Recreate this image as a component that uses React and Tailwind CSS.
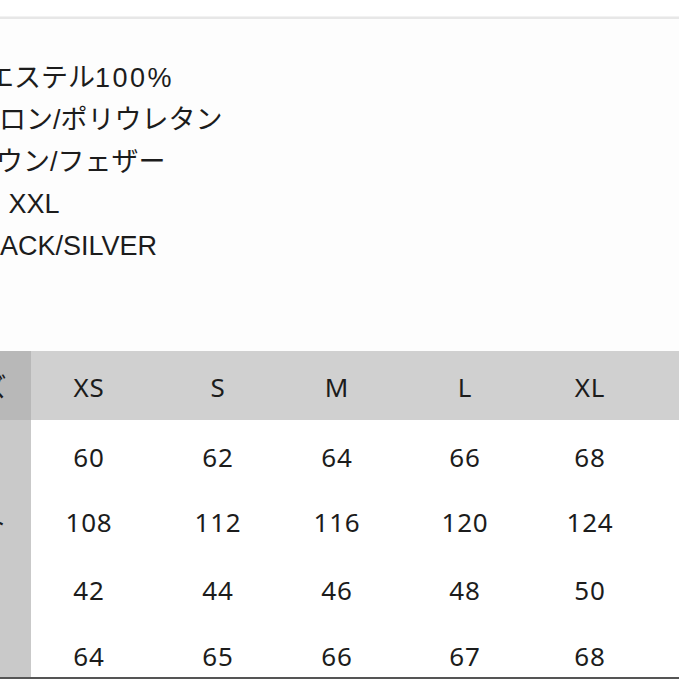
export default function App() {
  const lines = [
    { t: "ポリエステル", t2: "100%", ml: "ml-[-67px]" },
    { t: "ナイロン/ポリウレタン", ml: "ml-[-55px]" },
    { t: "ダウン/フェザー", ml: "ml-[-31px]" },
    { t: "XS 〜\u00a0\u00a0XXL", ml: "ml-[-77px]" },
    { t: "BLACK/SILVER", ml: "ml-[-33px]" },
  ];
  const sizes = ["XS", "S", "M", "L", "XL", "XXL"];
  const rows = [
    { label: "着丈", v: ["60", "62", "64", "66", "68", "70"], h: "h-[65px]", p: "items-center pt-[9px]" },
    { label: "バスト", v: ["108", "112", "116", "120", "124", "128"], h: "h-[68px]", p: "items-center pt-[6px]" },
    { label: "肩幅", v: ["42", "44", "46", "48", "50", "52"], h: "h-[68px]", p: "items-center pt-[6px]" },
    { label: "袖丈", v: ["64", "65", "66", "67", "68", "69"], h: "h-[56px]", p: "items-start pt-[16px]" },
  ];
  const cols = "grid grid-cols-[127px_116px_142px_96px_160px_90px_200px]";
  return (
    <div className="w-[679px] h-[679px] overflow-hidden bg-white flex flex-col text-[#1c1c1c]">
      <div className="h-[16px] shrink-0 bg-white" />
      <div className="h-[3px] shrink-0 border-t border-[#f2f2f2] border-b-2 border-b-[#e7e7e7]" />
      <div className="flex flex-col pt-[38px] h-[332px] shrink-0 bg-[#fdfdfd] overflow-hidden whitespace-nowrap text-[27px] leading-[42px] font-['Liberation_Sans','Noto_Sans_CJK_JP',sans-serif]">
        {lines.map((l) => (
          <div key={l.t} className={l.ml}>
            {l.t}
            {l.t2 && <span className="tracking-[2.5px]">{l.t2}</span>}
          </div>
        ))}
      </div>
      <div className="ml-[-96px] flex flex-col font-['Noto_Sans','Noto_Sans_CJK_JP',sans-serif] text-[26px] tracking-[0.8px]">
        <div className={cols + " h-[69px] bg-[#d0d0d0]"}>
          <div className="flex items-center justify-center bg-[#b8b8b8] pt-[4px]">サイズ</div>
          {sizes.map((s) => (
            <div key={s} className="flex items-center justify-center pt-[4px]">{s}</div>
          ))}
        </div>
        {rows.map((r) => (
          <div key={r.label} className={cols + " " + r.h + " bg-white"}>
            <div className={"flex justify-center bg-[#c9c9c9] " + r.p}>{r.label}</div>
            {r.v.map((v, i) => (
              <div key={i} className={"flex justify-center " + r.p}>{v}</div>
            ))}
          </div>
        ))}
        <div className="h-[2px] bg-[#555]" />
      </div>
    </div>
  );
}
